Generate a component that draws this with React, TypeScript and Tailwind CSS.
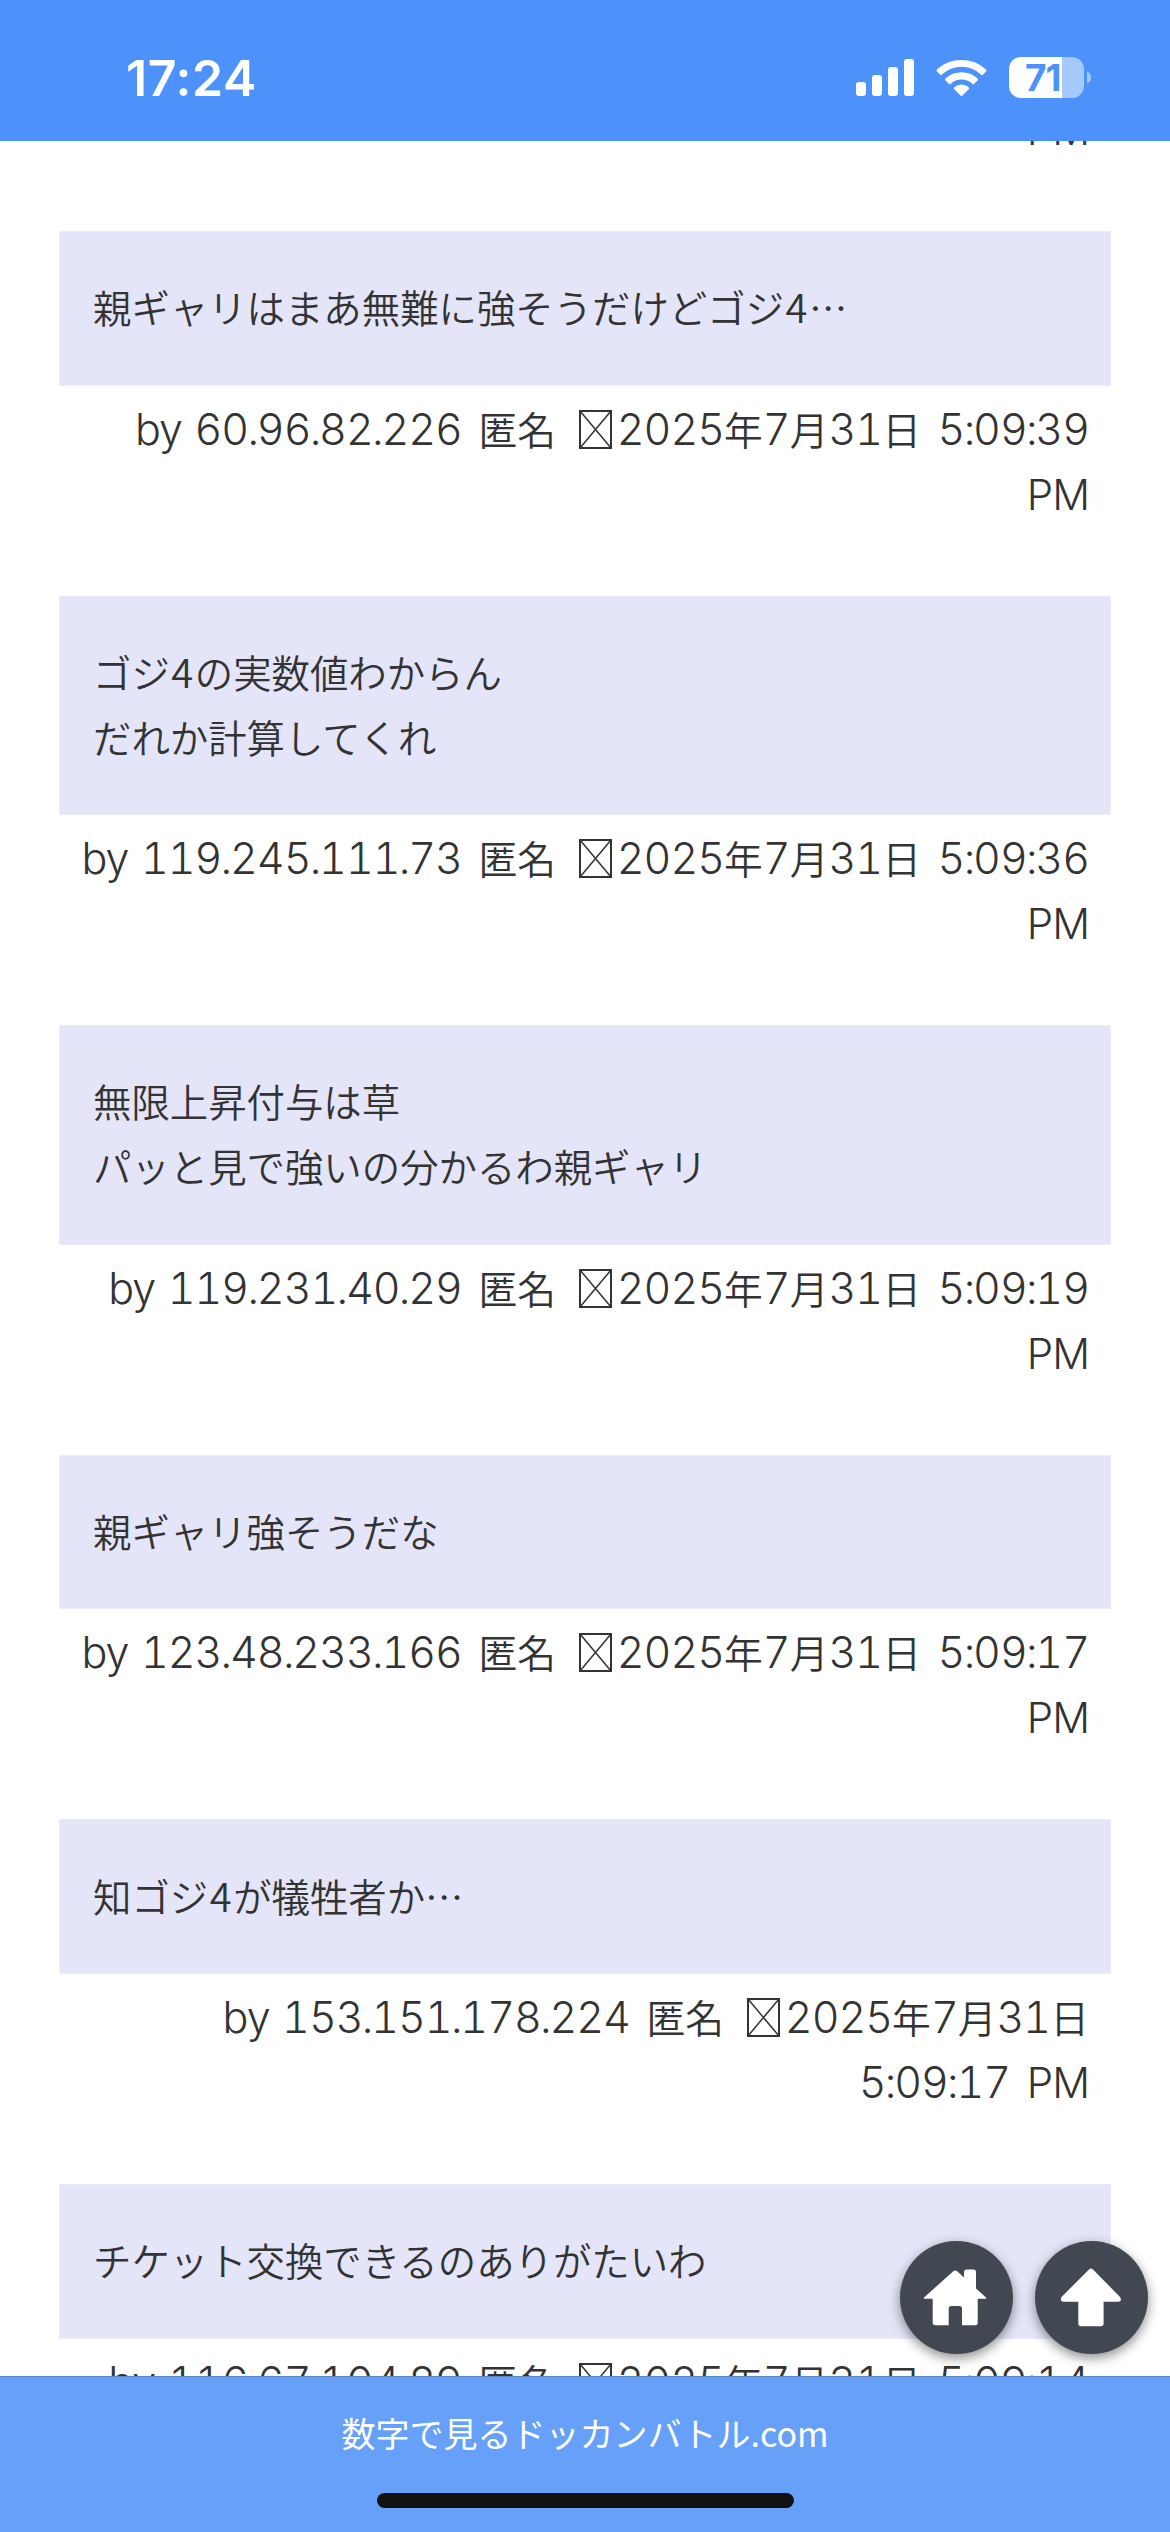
type Comment = {
  body: string[];
  ip: string;
  time: string;
  breakBeforeTime?: boolean;
};

const comments: Comment[] = [
  { body: ["親ギャリはまあ無難に強そうだけどゴジ4…"], ip: "60.96.82.226", time: "5:09:39" },
  { body: ["ゴジ4の実数値わからん", "だれか計算してくれ"], ip: "119.245.111.73", time: "5:09:36" },
  { body: ["無限上昇付与は草", "パッと見で強いの分かるわ親ギャリ"], ip: "119.231.40.29", time: "5:09:19" },
  { body: ["親ギャリ強そうだな"], ip: "123.48.233.166", time: "5:09:17" },
  { body: ["知ゴジ4が犠牲者か…"], ip: "153.151.178.224", time: "5:09:17", breakBeforeTime: true },
  { body: ["チケット交換できるのありがたいわ"], ip: "116.67.104.89", time: "5:09:14" },
];

// Latin runs: tabular digits, but narrow dots and colons between them
function Num({ children }: { children: string }) {
  return (
    <span className="font-['Inter'] text-[43px] leading-none font-light tracking-[-1px] tabular-nums [word-spacing:2px]">
      {children.split(/([.:])/).map((part, i) =>
        part === "." || part === ":" ? (
          <span key={i} className="-ml-px tracking-[-2.500px] normal-nums">
            {part}
          </span>
        ) : (
          part
        )
      )}
    </span>
  );
}

function Pm() {
  return <span className="font-['Inter'] text-[42px] leading-none font-light tracking-[-1px]">PM</span>;
}

function BodyLine({ text }: { text: string }) {
  return (
    <p>
      {text.split(/(4)/).map((part, i) =>
        part === "4" ? (
          <span key={i} className="mx-[1.5px] text-[40px] leading-none">
            4
          </span>
        ) : (
          part
        )
      )}
    </p>
  );
}

function MissingGlyph() {
  return (
    <svg className="mr-[5px] ml-[6px] inline-block align-[-4px]" width="33" height="39" viewBox="0 0 33 39" fill="none" stroke="#333">
      <rect x="1" y="1" width="31" height="37" strokeWidth="2" />
      <path d="M1 1l31 37M32 1L1 38" strokeWidth="1.5" />
    </svg>
  );
}

function Meta({ ip, time, breakBeforeTime }: Comment) {
  return (
    <div className="mt-[10px] mb-[70px] h-[130px] pr-[22px] text-right text-[38.800px] leading-[65px] whitespace-nowrap [word-spacing:8px]">
      <Num>by </Num>
      <Num>{ip}</Num> 匿名 <MissingGlyph />
      <Num>2025</Num>年<Num>7</Num>月<Num>31</Num>日{breakBeforeTime ? <br /> : " "}
      <Num>{time}</Num>
      {breakBeforeTime ? " " : <br />}
      <Pm />
    </div>
  );
}

function StatusBar() {
  return (
    <header className="absolute inset-x-0 top-0 z-20 flex h-[141px] items-start justify-between bg-[#4c92fa] pt-[57px] pr-[79px] pl-[126px] text-white">
      <span className="font-['Inter'] text-[50px] leading-[42px] font-semibold tracking-[0.600px]">17:24</span>
      <div className="flex items-start">
        <svg className="overflow-visible" width="235" height="42" viewBox="0 0 235 42" fill="white">
          <rect x="0" y="25" width="10" height="14" rx="3" />
          <rect x="16" y="18" width="10" height="21" rx="3" />
          <rect x="32" y="10" width="10" height="29" rx="3" />
          <rect x="48" y="2" width="10" height="37" rx="3" />
          <path d="M81 12.500a36 36 0 0 1 49 0q1 1 0 2l-3 3q-1 1-2 0a28.500 28.500 0 0 0-39 0q-1 1-2 0l-3-3q-1-1 0-2z" />
          <path d="M89.500 21.500a23.500 23.500 0 0 1 32 0q1 1 0 2l-3.300 3.200q-1 1-2 0a16 16 0 0 0-21.400 0q-1 1-2 0l-3.300-3.200q-1-1 0-2z" />
          <path d="M98.300 30.300a11 11 0 0 1 14.400 0q1 1 0 2l-6.200 6.300q-1 .8-2 0l-6.200-6.300q-1-1 0-2z" />
          <path d="M165 0h41v41h-41a12 12 0 0 1-12-12v-17a12 12 0 0 1 12-12z" />
          <path d="M206 0h10a12 12 0 0 1 12 12v17a12 12 0 0 1-12 12h-10zM231 14.500q4 1.500 4 6t-4 6z" fillOpacity=".5" />
          <text x="169" y="34" fill="#4c92fa" fontFamily="Inter" fontSize="37" fontWeight="700" letterSpacing="-1">
            71
          </text>
        </svg>
      </div>
    </header>
  );
}

function FloatingButtons() {
  return (
    <div className="absolute top-[2241px] right-[22px] z-10 flex gap-[22px]">
      <button className="size-[113px] rounded-full bg-[#424851] shadow-[0_4px_12px_rgba(0,0,0,0.45)]">
        <svg width="113" height="113" viewBox="0 0 113 113" fill="white">
          <path d="M53 30.500q2.200-2 4.400 0l6.600 6V31q0-2.500 2.500-2.500h7q2.500 0 2.500 2.500v16.500l10 9q1 1.300-1 1.300h-7.300v24q0 2.500-2.500 2.500H62V67.500q0-2.500-2.500-2.500h-8q-2.800 0-2.800 2.500v16.800H35.500q-2.800 0-2.800-2.500v-24H25q-2 0-1-1.300z" />
        </svg>
      </button>
      <button className="size-[113px] rounded-full bg-[#424851] shadow-[0_4px_12px_rgba(0,0,0,0.45)]">
        <svg width="113" height="113" viewBox="0 0 113 113" fill="white">
          <path d="M54 28.500q2-2 4 0l27 27.500q2.500 4.700-2 4.700H68.600v21.800q0 2.800-2.800 2.800H46.100q-2.800 0-2.800-2.800V60.700H29q-4.500 0-2.500-4.700z" />
        </svg>
      </button>
    </div>
  );
}

function BottomBar() {
  return (
    <footer className="absolute inset-x-0 bottom-0 z-20 flex h-[156px] flex-col items-center border-t border-[#5a86c4] bg-[#66a0f9]">
      <p className="mt-[32px] text-[34px] leading-[48px] font-normal text-white">数字で見るドッカンバトル.com</p>
      <div className="mt-[36px] h-[15px] w-[417px] rounded-full bg-[#111]" />
    </footer>
  );
}

export default function App() {
  return (
    <div className="relative h-[2532px] w-[1170px] overflow-hidden bg-white font-['Noto_Sans_CJK_JP',sans-serif] font-[350] text-[#333]">
      <StatusBar />
      <main className="px-[59px] pt-[96px]">
        <div className="mb-[70px] h-[65px] pr-[22px] text-right text-[38.800px] leading-[65px]">
          <Pm />
        </div>
        {comments.map((c) => (
          <section key={c.ip}>
            <div className="border border-[#ebebfa] bg-[#e5e5f9] px-[33px] pt-[42.300px] pb-[45.300px] text-[38.400px] leading-[65px]">
              {c.body.map((line) => (
                <BodyLine key={line} text={line} />
              ))}
            </div>
            <Meta {...c} />
          </section>
        ))}
      </main>
      <FloatingButtons />
      <BottomBar />
    </div>
  );
}
